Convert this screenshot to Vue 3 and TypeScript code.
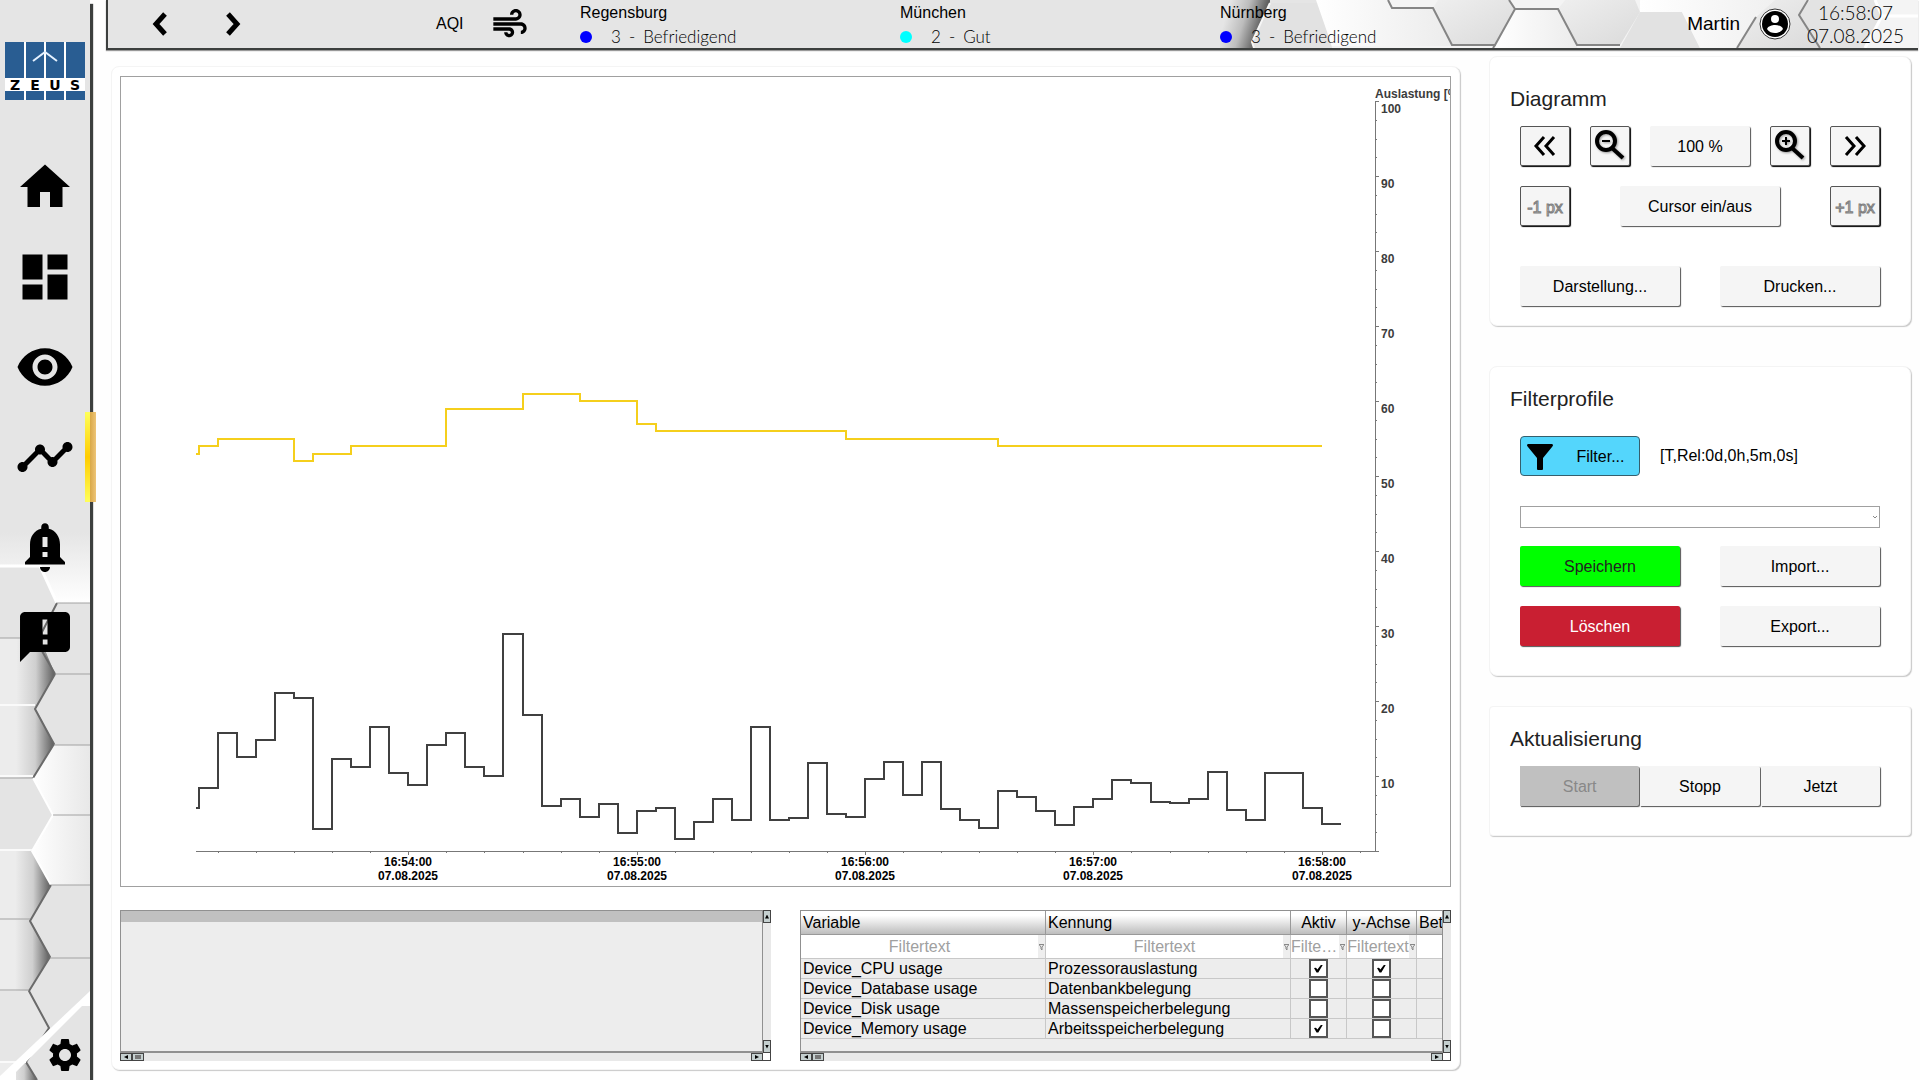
<script setup lang="ts">
import { ref } from 'vue'

interface NavItem {
  label: string
  path: string
  active?: boolean
}

const navItems: NavItem[] = [
  { label: 'Start', path: 'M10 20v-6h4v6h5v-8h3L12 3 2 12h3v8z' },
  { label: 'Dashboard', path: 'M3 13h8V3H3v10zm0 8h8v-6H3v6zm10 0h8V11h-8v10zm0-18v6h8V3h-8z' },
  {
    label: 'Ansicht',
    path: 'M12 4.500C7 4.500 2.730 7.610 1 12c1.730 4.390 6 7.500 11 7.500s9.270-3.110 11-7.500c-1.730-4.390-6-7.500-11-7.500zM12 17c-2.760 0-5-2.240-5-5s2.240-5 5-5 5 2.240 5 5-2.240 5-5 5zm0-8c-1.660 0-3 1.340-3 3s1.340 3 3 3 3-1.340 3-3-1.340-3-3-3z',
  },
  {
    label: 'Trend',
    active: true,
    path: 'M23 8c0 1.100-.9 2-2 2-.18 0-.35-.02-.51-.07l-3.560 3.550c.05.16.07.34.07.52 0 1.100-.9 2-2 2s-2-.9-2-2c0-.18.02-.36.07-.52l-2.550-2.550c-.16.05-.34.07-.52.07s-.36-.02-.52-.07l-4.550 4.560c.05.16.07.33.07.51 0 1.100-.9 2-2 2s-2-.9-2-2 .9-2 2-2c.18 0 .35.02.51.07l4.560-4.550C8.020 9.360 8 9.180 8 9c0-1.100.9-2 2-2s2 .9 2 2c0 .18-.02.36-.07.52l2.550 2.550c.16-.05.34-.07.52-.07s.36.02.52.07l3.550-3.560C19.020 8.350 19 8.180 19 8c0-1.100.9-2 2-2s2 .9 2 2z',
  },
  {
    label: 'Alarme',
    path: 'M18 16v-5c0-3.070-1.640-5.640-4.500-6.320V4c0-.83-.67-1.500-1.500-1.500s-1.500.67-1.500 1.500v.68C7.630 5.360 6 7.920 6 11v5l-2 2v1h16v-1l-2-2zm-5 0h-2v-2h2v2zm0-4h-2V8h2v4zm-1 10c1.100 0 2-.9 2-2h-4c0 1.100.89 2 2 2z',
  },
  {
    label: 'Meldungen',
    path: 'M20 2H4c-1.100 0-1.990.9-1.990 2L2 22l4-4h14c1.100 0 2-.9 2-2V4c0-1.100-.9-2-2-2zm-7 9h-2V5h2v6zm0 4h-2v-2h2v2z',
  },
]

const gearPath =
  'M19.140 12.940c.04-.3.06-.61.06-.94 0-.32-.02-.64-.07-.94l2.030-1.580c.18-.14.23-.41.12-.61l-1.920-3.320c-.12-.22-.37-.29-.59-.22l-2.390.96c-.5-.38-1.030-.7-1.620-.94l-.36-2.540c-.04-.24-.24-.41-.48-.41h-3.840c-.24 0-.43.17-.47.41l-.36 2.540c-.59.24-1.130.57-1.620.94l-2.390-.96c-.22-.08-.47 0-.59.22L2.740 8.870c-.12.21-.08.47.12.61l2.030 1.580c-.05.3-.09.63-.09.94s.02.64.07.94l-2.030 1.580c-.18.14-.23.41-.12.61l1.920 3.320c.12.22.37.29.59.22l2.390-.96c.5.38 1.030.7 1.620.94l.36 2.540c.05.24.24.41.48.41h3.840c.24 0 .44-.17.47-.41l.36-2.540c.59-.24 1.130-.56 1.620-.94l2.390.96c.22.08.47 0 .59-.22l1.920-3.320c.12-.22.07-.47-.12-.61l-2.010-1.580zM12 15.600c-1.980 0-3.600-1.620-3.600-3.600s1.620-3.600 3.600-3.600 3.600 1.620 3.600 3.600-1.620 3.600-3.600 3.600z'

const cities = [
  { name: 'Regensburg', level: '3', text: 'Befriedigend', color: '#0000ff' },
  { name: 'München', level: '2', text: 'Gut', color: '#00ffff' },
  { name: 'Nürnberg', level: '3', text: 'Befriedigend', color: '#0000ff' },
]

/* Chart geometry: five-second samples, 0 to 100 percent */
const left = 78
const step = 19.03
const base = 774
const perUnit = 7.5
const axisX = 1254
const toX = (i: number): number => Math.round(left + i * step)
const toY = (v: number): number => Math.round(base - v * perUnit)

const cpu = [
  8.4, 15.7, 12.6, 14.8, 21.1, 20.4, 2.9, 12.3, 11.2, 16.5, 10.4, 8.8, 14.1, 15.7, 11.2, 10, 29, 18.1,
  6, 6.9, 4.5, 6.3, 2.4, 5.3, 5.8, 1.6, 3.9, 7, 4.2, 16.6, 4.2, 4.4, 11.7, 4.9, 4.6, 9.6, 11.9, 7.5,
  11.9, 5.6, 4.1, 3.1, 8, 7.2, 5.4, 3.5, 5.9, 6.9, 9.5, 9.1, 6.5, 6.4, 6.9, 10.5, 5.5, 4.2, 10.4,
  10.4, 5.8, 3.6,
]
const memory: [number, number][] = [
  [0, 54], [1, 55], [5, 52], [6, 53], [8, 54], [13, 59], [17, 61], [20, 60], [23, 57], [24, 56], [34, 55], [42, 54],
]

function stepPath(start: number, points: [number, number][], end: number): string {
  let d = `M${left - 3} ${toY(start)}`
  for (const [i, v] of points) d += `H${toX(i)}V${toY(v)}`
  return d + `H${toX(end)}`
}
const cpuPath = stepPath(5.7, cpu.map((v, i): [number, number] => [i, v]), 60)
const memoryPath = stepPath(53, memory, 59)

const xLabels = ['16:54:00', '16:55:00', '16:56:00', '16:57:00', '16:58:00'].map((time, i) => ({
  time,
  x: toX(11 + i * 12),
}))
const xTicks = Array.from({ length: 31 }, (_, i) => toX(1 + i * 2))
const yLabels = Array.from({ length: 10 }, (_, i) => (i + 1) * 10)
const yTicks = Array.from({ length: 41 }, (_, i) => ({ y: toY(i * 2.5), major: i % 4 === 0 }))

const rows = ref([
  { name: 'Device_CPU usage', tag: 'Prozessorauslastung', active: true, axis: true },
  { name: 'Device_Database usage', tag: 'Datenbankbelegung', active: false, axis: false },
  { name: 'Device_Disk usage', tag: 'Massenspeicherbelegung', active: false, axis: false },
  { name: 'Device_Memory usage', tag: 'Arbeitsspeicherbelegung', active: true, axis: false },
])
const columns = ['Variable', 'Kennung', 'Aktiv', 'y-Achse']
</script>

<template>
  <div class="page">
    <aside class="sidebar">
      <svg class="side-art" width="90" height="580" viewBox="0 -40 90 580" aria-hidden="true">
        <defs>
          <linearGradient id="sideFade" x1="0" y1="0" x2="0" y2="1">
            <stop offset="0" stop-color="#e5e5e5" />
            <stop offset="1" stop-color="#f0f0f0" />
          </linearGradient>
          <linearGradient id="sideGlow" x1="0" y1="0" x2="0" y2="1">
            <stop offset="0" stop-color="#e8e8e8" />
            <stop offset="1" stop-color="#fff" />
          </linearGradient>
          <linearGradient id="sideDark" x1="0" y1="0" x2="1" y2="0">
            <stop offset="0.3" stop-color="#ececec" />
            <stop offset="0.65" stop-color="#cfcfcf" />
            <stop offset="1" stop-color="#5c5c5c" />
          </linearGradient>
          <linearGradient id="sideLight" x1="0" y1="0" x2="1" y2="0">
            <stop offset="0" stop-color="#fff" />
            <stop offset="1" stop-color="#e8e8e8" />
          </linearGradient>
        </defs>
        <rect y="-8" width="90" height="34" fill="url(#sideFade)" />
        <rect y="26" width="90" height="514" fill="#e4e4e4" />
        <path d="M40 26L57 63H90V0H40Z" fill="url(#sideGlow)" />
        <path d="M0 98H40L55 134L35 169H0Z" fill="url(#sideDark)" />
        <path d="M0 167H35L54 204L33 238H0Z" fill="url(#sideDark)" />
        <path d="M33 238L54 205H90V275H53Z" fill="url(#sideLight)" />
        <path d="M32 311L53 275H90V345H51Z" fill="url(#sideLight)" />
        <path d="M0 311H32L51 345L30 381H0Z" fill="url(#sideDark)" />
        <path d="M0 379H30L50 417L29 451H0Z" fill="url(#sideDark)" />
        <path d="M0 451H29L49 488L26 522H0Z" fill="#e6e6e6" />
        <path d="M0 522H26L37 540H0Z" fill="url(#sideDark)" />
        <path d="M0 26H40L57 63" fill="none" stroke="#fff" stroke-width="3" />
        <path d="M57 63L42 92V111L55 134L35 169L54 204L33 238" fill="none" stroke="#6a6a6a" stroke-width="2" />
        <path d="M33 238L53 275L32 311L51 345" fill="none" stroke="#fff" stroke-width="2" />
        <path d="M51 345L30 381L50 417L29 451L49 488L26 522L37 540" fill="none" stroke="#6a6a6a" stroke-width="2" />
        <path d="M57 63H90M55 134H90M54 205H90M53 275H90M51 345H90M50 418H90M0 98H40M0 238H33M0 379H30M0 450H29" fill="none" stroke="#a2a2a2" />
        <path d="M0 165H35M0 310H32M0 236H33M0 522H26" fill="none" stroke="#fafafa" stroke-width="2" />
        <path d="M90 451V466H82L16 532V540H0V536Z" fill="#fff" />
      </svg>
      <svg class="logo" width="80" height="58" viewBox="0 0 80 58" role="img" aria-label="ZEUS">
        <rect width="80" height="58" fill="#fff" />
        <path d="M0 0H19V36H0ZM21 0H39V36H21ZM41 0H59V36H41ZM61 0H80V36H61ZM0 49H19V58H0ZM21 49H39V58H21ZM41 49H59V58H41ZM61 49H80V58H61Z" fill="#295d92" />
        <path d="M28 19L40 10L52 19" fill="none" stroke="#e4f1ff" stroke-width="2" />
        <text class="logo-text" y="48" text-anchor="middle"><tspan x="10">Z</tspan><tspan x="30">E</tspan><tspan x="50">U</tspan><tspan x="70">S</tspan></text>
      </svg>
      <nav class="side-nav">
        <a v-for="item in navItems" :key="item.label" href="#" :aria-label="item.label" :class="{ active: item.active }">
          <svg width="60" height="60" viewBox="0 0 24 24"><path :d="item.path" /></svg>
        </a>
      </nav>
      <a class="gear" href="#" aria-label="Einstellungen">
        <svg width="40" height="40" viewBox="0 0 24 24"><path :d="gearPath" /></svg>
      </a>
    </aside>

    <div class="content">
      <header class="topbar">
        <svg class="top-art" width="698" height="48" viewBox="0 0 698 48" aria-hidden="true">
          <defs>
            <linearGradient id="topDark" x1="0" y1="0" x2="1" y2="0.300">
              <stop offset="0.200" stop-color="#e5e5e5" />
              <stop offset="0.550" stop-color="#bdbdbd" />
              <stop offset="0.900" stop-color="#5e5e5e" />
            </linearGradient>
            <linearGradient id="topWhite" x1="0" y1="0" x2="1" y2="0">
              <stop offset="0" stop-color="#fff" />
              <stop offset="1" stop-color="#ececec" />
            </linearGradient>
            <linearGradient id="topHex" x1="0" y1="0" x2="1" y2="1">
              <stop offset="0" stop-color="#efefef" />
              <stop offset="1" stop-color="#dadada" />
            </linearGradient>
          </defs>
          <path d="M98 0H698V48H112Z" fill="#f4f4f4" />
          <path d="M0 0H50V3L32 42L34 48H0Z" fill="url(#topDark)" />
          <path d="M50 3H98L112 48H34L32 42Z" fill="#e2e2e2" />
          <path d="M50 3L32 42L34 48" fill="none" stroke="#f6f6f6" stroke-width="2" />
          <path d="M96 0H168L172 8H213L232 46H112Z" fill="url(#topWhite)" />
          <path d="M218 0H290L295 9L275 45H232L213 8Z" fill="url(#topHex)" />
          <path d="M345 0H415L420 12L400 45H357L338 9Z" fill="url(#topHex)" />
          <path d="M295 9H338L357 45V48H275Z" fill="url(#topWhite)" />
          <path d="M420 12H462L480 48H400Z" fill="#e2e2e2" />
          <path d="M420 0H590L560 14H536L517 48H480L462 12H420Z" fill="url(#topWhite)" />
          <path d="M536 17L555 0H588L579 15L600 48H517Z" fill="url(#topHex)" />
          <path d="M590 0H655L662 16L645 48H600L579 15Z" fill="#e3e3e3" />
          <path d="M168 0L172 8H213L232 45H275L295 9L289 0M295 9H338L357 45H400" fill="none" stroke="#858585" stroke-width="2" />
          <path d="M275 45L273 48M536 17L517 48M588 0L579 15L600 48" fill="none" stroke="#858585" stroke-width="2" />
          <path d="M662 16H698M655 0L662 16L645 48" fill="none" stroke="#fff" stroke-width="3" />
        </svg>
        <div class="history">
          <button type="button" aria-label="Zurück">
            <svg width="20" height="24" viewBox="0 0 20 24"><path d="M15 2L6 12L15 22" /></svg>
          </button>
          <button type="button" aria-label="Vor">
            <svg width="20" height="24" viewBox="0 0 20 24"><path d="M5 2L14 12L5 22" /></svg>
          </button>
        </div>
        <div class="aqi">
          <span>AQI</span>
          <svg width="40" height="40" viewBox="0 0 24 24" aria-hidden="true">
            <path d="M14.500 17c0 1.650-1.350 3-3 3s-3-1.350-3-3h2c0 .55.45 1 1 1s1-.45 1-1-.45-1-1-1H2v-2h9.500c1.650 0 3 1.350 3 3zM19 6.500C19 4.570 17.430 3 15.500 3S12 4.570 12 6.500h2c0-.83.67-1.500 1.500-1.500s1.500.67 1.500 1.500S16.330 8 15.500 8H2v2h13.500c1.930 0 3.500-1.570 3.500-3.500zm-.5 4.500H2v2h16.500c.83 0 1.500.67 1.500 1.500s-.67 1.500-1.500 1.500v2c1.930 0 3.500-1.570 3.500-3.500S20.430 11 18.500 11z" />
          </svg>
        </div>
        <div v-for="city in cities" :key="city.name" class="city">
          <div class="city-name">{{ city.name }}</div>
          <div class="city-value">
            <span class="dot" :style="{ background: city.color }"></span>
            <span>{{ city.level }}</span><span>-</span><span>{{ city.text }}</span>
          </div>
        </div>
        <div class="user">
          <span>Martin</span>
          <svg width="32" height="32" viewBox="0 0 32 32" aria-hidden="true">
            <circle cx="16" cy="16" r="15" fill="#fff" stroke="#333" />
            <circle cx="16" cy="16" r="13" />
            <circle cx="16" cy="11" r="4" fill="#fff" />
            <path d="M8 21C9 18 13 17 16 17S23 18 24 21C22 24 19 25 16 25S10 24 8 21Z" fill="#fff" />
          </svg>
        </div>
        <div class="clock"><span>16:58:07</span><span>07.08.2025</span></div>
      </header>

      <main class="main">
        <section class="card work">
          <div class="chart">
            <svg viewBox="0 0 1329 809" role="img" aria-label="Auslastung">
              <text x="1254" y="21" class="y-text">Auslastung [%]</text>
              <path :d="`M${axisX}.5 24V${base}.5M75 ${base}.5H1258`" class="axis" />
              <path v-for="t in yTicks" :key="t.y" :d="`M${axisX} ${t.y}.5h${t.major ? 4 : 2}`" class="axis" />
              <path v-for="x in xTicks" :key="x" :d="`M${x}.5 ${base}v2`" class="axis" />
              <text v-for="v in yLabels" :key="v" x="1260" :y="toY(v) + 12" class="y-text">{{ v }}</text>
              <g v-for="l in xLabels" :key="l.time" class="x-text">
                <path :d="`M${l.x}.5 ${base}v4`" class="axis" />
                <text :x="l.x" y="789">{{ l.time }}</text>
                <text :x="l.x" y="803">07.08.2025</text>
              </g>
              <path :d="memoryPath" class="line memory" />
              <path :d="cpuPath" class="line cpu" />
            </svg>
          </div>

          <div class="lists">
            <div class="grid-box">
              <div class="pane"><div class="empty-head"></div></div>
              <div class="vbar"><i class="up"></i><i class="down"></i></div>
              <div class="hbar"><i class="back"></i><i class="thumb"></i><i class="next"></i></div>
              <div class="corner"></div>
            </div>
            <div class="grid-box">
              <div class="pane">
                <table>
                  <colgroup><col /><col /><col class="c-active" /><col class="c-axis" /><col class="c-rest" /></colgroup>
                  <thead>
                    <tr class="heads">
                      <th v-for="c in columns" :key="c" scope="col">{{ c }}</th>
                      <th scope="col">Bet</th>
                    </tr>
                    <tr class="filters">
                      <td v-for="c in columns" :key="c">
                        <div class="filter-cell">
                          <input type="text" placeholder="Filtertext" :aria-label="`Filter ${c}`" />
                          <span class="funnel"><svg width="5" height="6" viewBox="0 0 5 6"><path d="M0 0.500H5L3 3V6L2 5V3Z" fill="none" stroke="#888" /></svg></span>
                        </div>
                      </td>
                      <td></td>
                    </tr>
                  </thead>
                  <tbody>
                    <tr v-for="r in rows" :key="r.name">
                      <td>{{ r.name }}</td>
                      <td>{{ r.tag }}</td>
                      <td class="tick"><input v-model="r.active" type="checkbox" :aria-label="`${r.name} aktiv`" /></td>
                      <td class="tick"><input v-model="r.axis" type="checkbox" :aria-label="`${r.name} y-Achse`" /></td>
                      <td></td>
                    </tr>
                  </tbody>
                </table>
              </div>
              <div class="vbar"><i class="up"></i><i class="down"></i></div>
              <div class="hbar"><i class="back"></i><i class="thumb"></i><i class="next"></i></div>
              <div class="corner"></div>
            </div>
          </div>
        </section>

        <div class="panels">
          <section class="card panel diagram">
            <h2>Diagramm</h2>
            <div class="row">
              <button type="button" class="btn framed w50" aria-label="Zurückblättern">
                <svg width="24" height="20" viewBox="0 0 24 20" class="chev"><path d="M11 1L3 10L11 19M21 1L13 10L21 19" /></svg>
              </button>
              <button type="button" class="btn framed w40" aria-label="Verkleinern">
                <svg width="32" height="32" viewBox="0 0 32 32" class="lens"><circle cx="12" cy="11" r="9" /><path d="M18 18L29 28" stroke-width="4" /><path d="M8 11H16" stroke-width="2" /></svg>
              </button>
              <button type="button" class="btn w100">100 %</button>
              <button type="button" class="btn framed w40" aria-label="Vergrößern">
                <svg width="32" height="32" viewBox="0 0 32 32" class="lens"><circle cx="12" cy="11" r="9" /><path d="M18 18L29 28" stroke-width="4" /><path d="M8 11H16M12 7V15" stroke-width="2" /></svg>
              </button>
              <button type="button" class="btn framed w50" aria-label="Vorblättern">
                <svg width="24" height="20" viewBox="0 0 24 20" class="chev"><path d="M3 1L11 10L3 19M13 1L21 10L13 19" /></svg>
              </button>
            </div>
            <div class="row">
              <button type="button" class="btn framed w50 off" disabled>-1 px</button>
              <button type="button" class="btn w160">Cursor ein/aus</button>
              <button type="button" class="btn framed w50 off" disabled>+1 px</button>
            </div>
            <div class="row last">
              <button type="button" class="btn w160">Darstellung...</button>
              <button type="button" class="btn w160">Drucken...</button>
            </div>
          </section>

          <section class="card panel profiles">
            <h2>Filterprofile</h2>
            <div class="filter-row">
              <button type="button" class="filter-btn">
                <svg width="28" height="28" viewBox="0 0 28 28" aria-hidden="true"><path d="M2 1H26Q28 2 26 4L17 15V26Q17 27 16 27H12Q11 27 11 26V15L2 4Q0 2 2 1Z" /></svg>
                <span>Filter...</span>
              </button>
              <span>[T,Rel:0d,0h,5m,0s]</span>
            </div>
            <div class="select-wrap">
              <select aria-label="Filterprofil"><option></option></select>
              <svg width="4" height="4" viewBox="0 0 4 4" aria-hidden="true"><path d="M0 1L2 3L4 1" fill="none" stroke="#888" /></svg>
            </div>
            <div class="row">
              <button type="button" class="btn w160 save">Speichern</button>
              <button type="button" class="btn w160">Import...</button>
            </div>
            <div class="row">
              <button type="button" class="btn w160 delete">Löschen</button>
              <button type="button" class="btn w160">Export...</button>
            </div>
          </section>

          <section class="card panel refresh">
            <h2>Aktualisierung</h2>
            <div class="row joined">
              <button type="button" class="btn start" disabled>Start</button>
              <button type="button" class="btn">Stopp</button>
              <button type="button" class="btn">Jetzt</button>
            </div>
          </section>
        </div>
      </main>
    </div>
  </div>
</template>

<style>
body {
  margin: 0;
  background: #fefefe;
}
</style>

<style scoped>
.page {
  display: flex;
  min-height: 100vh;
  font: 16px/20px "Liberation Sans", Arial, sans-serif;
  color: #000;
}
.page *,
.page {
  box-sizing: border-box;
}
button,
input,
select {
  font: inherit;
  color: inherit;
  margin: 0;
}
svg {
  display: block;
}

/* Sidebar */
.sidebar {
  position: relative;
  flex: none;
  width: 90px;
  display: flex;
  flex-direction: column;
  align-items: center;
  background: #e5e5e5;
  box-shadow: 3px 4px 1px #3c3f3e;
}
.side-art {
  position: absolute;
  left: 0;
  bottom: 0;
}
.logo {
  margin: 42px 0 57px;
}
.logo-text {
  font: bold 14px "DejaVu Sans", sans-serif;
}
.side-nav {
  position: relative;
  display: flex;
  flex-direction: column;
  gap: 30px;
  width: 100%;
}
.side-nav a {
  position: relative;
  display: flex;
  justify-content: center;
}
.side-nav .active::after {
  content: "";
  position: absolute;
  right: -6px;
  top: -15px;
  width: 11px;
  height: 90px;
  background:
    linear-gradient(90deg, transparent 5px, #d9a847 5px, #eec578),
    linear-gradient(#ffff5a, #fc0 50%, #ffff5a);
}
.gear {
  position: relative;
  margin: auto 5px 5px auto;
}

/* Header */
.content {
  flex: 1;
  min-width: 0;
  display: flex;
  flex-direction: column;
  padding-left: 16px;
}
.topbar {
  position: relative;
  display: flex;
  align-items: center;
  height: 50px;
  margin-right: 2px;
  padding-right: 15px;
  background: #e5e5e5;
  border: solid #3c3f3e;
  border-width: 0 0 2px 2px;
  box-shadow: 0 1px 1px #999;
}
.top-art {
  position: absolute;
  right: 0;
  top: 0;
}
.topbar > div {
  position: relative;
}
.history {
  display: flex;
  gap: 53px;
  margin-left: 42px;
}
.history button {
  padding: 0;
  border: 0;
  background: none;
}
.history path {
  fill: none;
  stroke: #000;
  stroke-width: 5;
}
.aqi {
  display: flex;
  align-items: center;
  gap: 26px;
  width: 144px;
  margin-left: 193px;
}
.city {
  width: 320px;
  padding-top: 2px;
  line-height: 24px;
}
.city-value {
  display: flex;
  align-items: center;
  gap: 8px;
  font: 300 17px/24px Lato, "Open Sans", sans-serif;
  color: #000;
}
.dot {
  width: 12px;
  height: 12px;
  margin-right: 11px;
  border-radius: 50%;
}
.user {
  display: flex;
  align-items: center;
  gap: 19px;
  margin-left: auto;
  font-size: 19px;
}
.clock {
  display: flex;
  flex-direction: column;
  align-items: center;
  width: 95px;
  margin-left: 17px;
  font: 300 19px/23px Lato, "Open Sans", sans-serif;
  color: #000;
}

/* Main area */
.main {
  flex: 1;
  display: flex;
  align-items: flex-start;
  padding: 6px 9px 9px 5px;
  gap: 31px;
}
.card {
  background: #fff;
  border: 1px solid #f4f4f4;
  border-radius: 8px;
  box-shadow: 1px 1px 1px #c8c8c8;
}
.work {
  flex: 1;
  min-width: 0;
  margin-top: 10px;
  padding: 9px 8px 8px;
}
.chart {
  border: 1px solid #a0a0a0;
}
.chart svg {
  width: 100%;
  height: auto;
  overflow: hidden;
  font: bold 12px "Liberation Sans", Arial, sans-serif;
}
.y-text {
  fill: #3c3c3c;
}
.x-text {
  text-anchor: middle;
}
.axis {
  fill: none;
  stroke: #777;
}
.line {
  fill: none;
  stroke-width: 2;
}
.memory {
  stroke: #f5cf1c;
}
.cpu {
  stroke: #404040;
}

/* Lists with their scroll bars */
.lists {
  display: flex;
  gap: 29px;
  margin-top: 23px;
}
.grid-box {
  flex: 1;
  min-width: 0;
  display: grid;
  grid-template: 143px 8px / minmax(0, 1fr) 8px;
}
.pane {
  overflow: hidden;
  background: #ededed;
  border: solid #909090;
  border-width: 1px 1px 2px;
}
.empty-head {
  height: 11px;
  background: #c0c0c0;
}
.vbar,
.hbar {
  display: flex;
  justify-content: space-between;
  background: #e9e9e9;
}
.vbar {
  flex-direction: column;
}
.vbar i,
.hbar i {
  display: flex;
  align-items: center;
  justify-content: center;
  width: 12px;
  height: 8px;
  background: #c5d0d0;
  border: 1px solid #444;
}
.vbar i {
  width: 8px;
  height: 13px;
}
.hbar .next {
  margin-left: auto;
}
.vbar i::before,
.hbar i::before {
  content: "";
  width: 4px;
  height: 4px;
  background: #000;
}
.up::before {
  clip-path: polygon(50% 0, 100% 100%, 0 100%);
}
.down::before {
  clip-path: polygon(0 0, 100% 0, 50% 100%);
}
.back::before {
  clip-path: polygon(0 50%, 100% 0, 100% 100%);
}
.next::before {
  clip-path: polygon(0 0, 100% 50%, 0 100%);
}
.hbar .thumb::before {
  width: 6px;
  background: #777;
}
.corner {
  background: #fff;
  border: solid #444;
  border-width: 0 1px 1px 0;
}
table {
  width: 100%;
  table-layout: fixed;
  border-collapse: separate;
  border-spacing: 0;
}
.c-active {
  width: 56px;
}
.c-axis {
  width: 70px;
}
.c-rest {
  width: 25px;
}
th,
td {
  overflow: hidden;
  padding: 0 0 0 2px;
  height: 20px;
  line-height: 19px;
  border: solid #c8c8c8;
  border-width: 0 1px 1px 0;
  font-weight: normal;
  text-align: left;
  white-space: nowrap;
}
.heads th {
  height: 24px;
  background: linear-gradient(#fff 20%, #bdbdbd);
  border-color: #999;
}
.heads th:nth-child(3),
.heads th:nth-child(4) {
  padding: 0;
  text-align: center;
}
th:last-child,
td:last-child {
  border-right: 0;
}
.filters td {
  height: 24px;
  padding: 0;
  background: #fff;
}
.filter-cell {
  display: flex;
  height: 23px;
}
.filter-cell input {
  flex: 1;
  width: 0;
  min-width: 0;
  padding: 0;
  border: 0;
  background: none;
  text-align: center;
  text-overflow: ellipsis;
}
.filter-cell input::placeholder {
  color: #a0a0a0;
}
.funnel {
  display: flex;
  flex: none;
  align-items: center;
  justify-content: center;
  width: 7px;
  background: #eee;
}
td.tick {
  padding: 0;
}
.tick input {
  appearance: none;
  display: flex;
  align-items: center;
  justify-content: center;
  width: 19px;
  height: 19px;
  margin: 0 auto;
  background: #fff;
  border: 2px solid #555;
}
.tick input:checked::after {
  content: "";
  width: 9px;
  height: 8px;
  background: #000;
  clip-path: polygon(0 45%, 22% 40%, 38% 62%, 80% 0, 100% 0, 48% 100%, 28% 100%);
}

/* Control panels */
.panels {
  flex: none;
  width: 422px;
  margin-left: -2px;
}
.panel {
  padding: 22px 30px 0;
}
h2 {
  margin: 0 -10px 17px;
  font-size: 21px;
  line-height: 20px;
  font-weight: normal;
  color: #222;
}
.diagram {
  height: 270px;
  padding-top: 32px;
}
.profiles {
  height: 310px;
  margin-top: 40px;
}
.refresh {
  height: 130px;
  margin-top: 30px;
  border-radius: 4px;
}
.row {
  display: flex;
  justify-content: space-between;
  margin-bottom: 20px;
}
.last {
  margin-top: 40px;
}
.btn {
  display: flex;
  align-items: center;
  justify-content: center;
  height: 40px;
  padding: 1px 0 0;
  background: #f5f5f5;
  border: 0;
  border-radius: 2px;
  box-shadow: 1px 1px 1px #555;
}
.framed {
  padding: 0;
  border: 1px solid #555;
  box-shadow: 1px 1px 1px #000;
}
.w40 {
  width: 40px;
}
.w50 {
  width: 50px;
}
.w100 {
  width: 100px;
}
.w160 {
  width: 160px;
}
.chev path {
  fill: none;
  stroke: #000;
  stroke-width: 3;
}
.lens {
  fill: none;
  stroke: #000;
  stroke-width: 4;
  filter: drop-shadow(1px 1px 1px #999);
}
.off {
  padding-top: 3px;
  color: #d8d8d8;
  -webkit-text-stroke: 1px #808080;
}
.filter-row {
  display: flex;
  align-items: center;
  gap: 20px;
  margin: 27px 0 30px;
}
.filter-btn {
  display: flex;
  align-items: center;
  width: 120px;
  height: 40px;
  padding: 1px 0 0 5px;
  background: #54d6fc;
  border: 1px solid #355f6d;
  border-radius: 4px;
}
.filter-btn span {
  flex: 1;
  padding-left: 8px;
}
.select-wrap {
  position: relative;
  margin-bottom: 18px;
}
select {
  display: block;
  appearance: none;
  width: 100%;
  height: 22px;
  background: #fff;
  border: 1px solid #a0a0a0;
  border-radius: 0;
}
.select-wrap svg {
  position: absolute;
  right: 3px;
  top: 9px;
}
.save {
  background: #0f0;
  color: #222;
}
.delete {
  background: #c91f32;
  color: #fff;
}
.joined {
  gap: 1px;
}
.joined .btn {
  flex: 1;
  border-radius: 0 2px 2px 0;
}
.joined .start {
  background: #c0c0c0;
  color: #888;
}
</style>
